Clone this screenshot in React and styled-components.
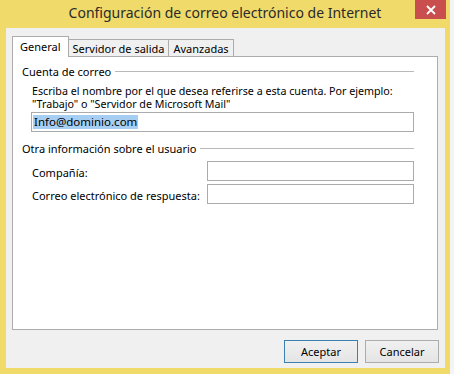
import styled, { createGlobalStyle } from "styled-components"

const GlobalStyle = createGlobalStyle`
    html, body {
        margin: 0;
        padding: 0;
        background-color: #F4F4F4;
    }
    body {
        width: 454px;
        height: 374px;
        overflow: hidden;
        font-family: "Noto Sans", "Open Sans", sans-serif;
    }
`

export default function App() {
    return (
        <>
            <GlobalStyle />
            <Desktop>
                <WindowFrame>
                    <TitleBar>
                        <span />
                        <Title>Configuración de correo electrónico de Internet</Title>
                        <CloseButton aria-label="Cerrar">
                            <svg width="10" height="10" viewBox="0 0 10 10">
                                <path d="M1 1 L9 9 M9 1 L1 9" stroke="#FFFFFF" strokeWidth="1.8" />
                            </svg>
                        </CloseButton>
                    </TitleBar>
                    <ClientArea>
                        <TabStrip>
                            <Tab selected>General</Tab>
                            <Tab>Servidor de salida</Tab>
                            <Tab>Avanzadas</Tab>
                        </TabStrip>
                        <TabPanel>
                            <GroupHeading>
                                <span>Cuenta de correo</span>
                                <Rule />
                            </GroupHeading>
                            <GroupBody>
                                <Description>
                                    <DescLine>Escriba el nombre por el que desea referirse a esta cuenta. Por ejemplo:</DescLine>
                                    <DescLine>"Trabajo" o "Servidor de Microsoft Mail"</DescLine>
                                </Description>
                                <TextBox>
                                    <Selection>Info@dominio.com</Selection>
                                </TextBox>
                            </GroupBody>

                            <GroupHeading>
                                <span>Otra información sobre el usuario</span>
                                <Rule />
                            </GroupHeading>
                            <FieldGrid>
                                <FieldLabel>Compañía:</FieldLabel>
                                <TextBox />
                                <FieldLabel>Correo electrónico de respuesta:</FieldLabel>
                                <TextBox />
                            </FieldGrid>
                        </TabPanel>
                        <ButtonRow>
                            <DialogButton primary>Aceptar</DialogButton>
                            <DialogButton>Cancelar</DialogButton>
                        </ButtonRow>
                    </ClientArea>
                </WindowFrame>
            </Desktop>
        </>
    )
}

const Desktop = styled.div`
    width: 454px;
    height: 374px;
    display: flex;
`
const WindowFrame = styled.div`
    width: 450px;
    height: 374px;
    box-sizing: border-box;
    padding: 0 5px 7px 6px;
    display: flex;
    flex-direction: column;
    background-color: #EFDA6A;
`
const TitleBar = styled.div`
    height: 28px;
    flex-shrink: 0;
    display: grid;
    grid-template-columns: 1fr auto 1fr;
    align-items: start;
    margin: 0 -5px 0 -6px;
`
const Title = styled.div`
    padding-top: 3px;
    font-size: 14px;
    line-height: 20px;
    color: #2B2B2B;
    white-space: nowrap;
`
const CloseButton = styled.div`
    justify-self: end;
    margin-right: 4px;
    width: 31px;
    height: 19px;
    display: flex;
    align-items: center;
    justify-content: center;
    background-color: #C84F4E;
`
const ClientArea = styled.div`
    flex: 1;
    display: flex;
    flex-direction: column;
    padding: 9px 7px 5px 6px;
    background-color: #F0F0F0;
    box-sizing: border-box;
`
const TabStrip = styled.div`
    display: flex;
    align-items: flex-end;
    height: 20px;
    position: relative;
    z-index: 1;
    margin-bottom: -1px;
`
const Tab = styled.div`
    box-sizing: border-box;
    height: ${props => props.selected ? "21px" : "18px"};
    padding: ${props => props.selected ? "2px 7px 0 7px" : "1px 4px 0 4px"};
    margin-left: ${props => props.selected ? "0" : "-1px"};
    background-color: ${props => props.selected ? "#FFFFFF" : "#F0F0F0"};
    border: 1px solid #ACACAC;
    border-bottom: ${props => props.selected ? "none" : "1px solid #ACACAC"};
    font-size: 11px;
    line-height: 15px;
    color: #000000;
    white-space: nowrap;
`
const TabPanel = styled.div`
    height: 274px;
    box-sizing: border-box;
    padding: 7px 23px 0 9px;
    background-color: #FFFFFF;
    border: 1px solid #ACACAC;
`
const GroupHeading = styled.div`
    display: flex;
    align-items: center;
    gap: 4px;
    height: 14px;
    font-size: 11px;
    color: #000000;
    white-space: nowrap;
`
const Rule = styled.div`
    flex: 1;
    height: 1px;
    background-color: #B9B9B9;
`
const GroupBody = styled.div`
    padding: 7px 0 9px 9px;
`
const Description = styled.div`
    margin: 0 0 2px 1px;
    display: flex;
    flex-direction: column;
`
const DescLine = styled.span`
    font-size: 10.7px;
    line-height: 12.5px;
    color: #000000;
    white-space: nowrap;
`
const TextBox = styled.div`
    height: 20px;
    box-sizing: border-box;
    padding: 2px 1px;
    border: 1px solid #ABABAB;
    background-color: #FFFFFF;
    display: flex;
    align-items: center;
`
const Selection = styled.span`
    padding: 0 1px;
    background-color: #A6CDF2;
    font-size: 11.5px;
    line-height: 14px;
    color: #000000;
`
const FieldGrid = styled.div`
    display: grid;
    grid-template-columns: 175px 1fr;
    row-gap: 3px;
    align-items: center;
    padding: 6px 0 0 10px;
`
const FieldLabel = styled.div`
    padding: 2px 0 0 0;
    font-size: 11px;
    color: #000000;
    white-space: nowrap;
`
const ButtonRow = styled.div`
    display: flex;
    justify-content: flex-end;
    gap: 7px;
    margin: 10px -1px 0 0;
`
const DialogButton = styled.div`
    width: 74px;
    height: 23px;
    box-sizing: border-box;
    display: flex;
    align-items: center;
    justify-content: center;
    font-size: 11px;
    color: #000000;
    background: linear-gradient(#F0F0F0, #E5E5E5);
    border: 1px solid ${props => props.primary ? "#3C7FB1" : "#ACACAC"};
`
